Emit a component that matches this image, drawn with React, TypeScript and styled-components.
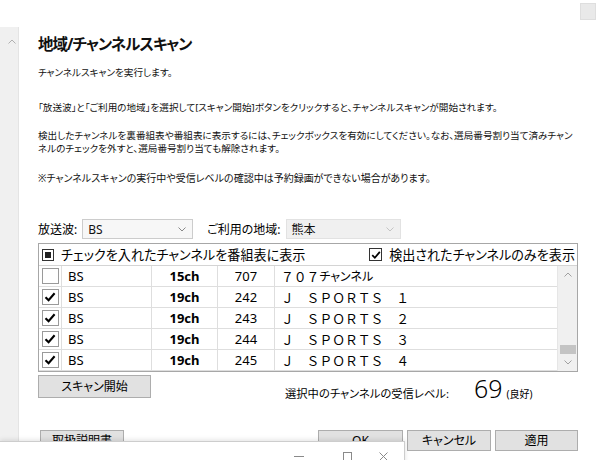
import React from "react";
import styled, { createGlobalStyle } from "styled-components";

const FONT = `"Noto Sans", "Noto Sans CJK JP", sans-serif`;

const Global = createGlobalStyle`
  html, body { margin: 0; padding: 0; background: #fff; }
  body { font-family: ${FONT}; color: #000; font-feature-settings: "palt"; }
  * { box-sizing: border-box; }
`;

const Page = styled.div`
  position: relative;
  width: 596px;
  height: 460px;
  overflow: hidden;
  display: flex;
  align-items: stretch;
  background: #fff;
`;

const SideScroll = styled.div`
  width: 19px;
  flex-shrink: 0;
  margin-top: 27px;
  padding: 12px 0 0 5px;
  background: #f0f0f0;
  border-right: 1px solid #e4e4e4;
  display: flex;
  justify-content: center;
  align-items: flex-start;
`;

const Main = styled.main`
  width: 540px;
  margin-left: 19px;
  padding-top: 34px;
  display: flex;
  flex-direction: column;
`;

const Title = styled.h1`
  margin: 0;
  font-size: 15.5px;
  letter-spacing: -1px;
  line-height: 20px;
  font-weight: 700;
  color: #111;
`;

const Para = styled.p<{ $mt: number; $fs?: number }>`
  margin: ${(p) => p.$mt}px 0 0;
  font-size: ${(p) => p.$fs ?? 9.6}px;
  line-height: 13px;
  white-space: nowrap;
  color: #111;
`;

const FormRow = styled.div`
  display: flex;
  align-items: center;
  height: 20px;
  margin-top: 34px;
  font-size: 12px;
`;

const FieldLabel = styled.span<{ $ml?: number }>`
  margin-left: ${(p) => p.$ml ?? 0}px;
  margin-right: 5px;
`;

const Select = styled.div<{ $w: number; $disabled?: boolean }>`
  width: ${(p) => p.$w}px;
  height: 20px;
  display: flex;
  align-items: center;
  justify-content: space-between;
  padding: 0 6px 0 5px;
  font-size: 12px;
  background: ${(p) => (p.$disabled ? "#f0f0f0" : "#f7f7f7")};
  border: 1px solid ${(p) => (p.$disabled ? "#e2e2e2" : "#cccccc")};
  color: #111;
`;

const Table = styled.div`
  margin-top: 4px;
  border: 1px solid #a7a7a7;
  display: flex;
  flex-direction: column;
`;

const TableHead = styled.div`
  height: 22px;
  display: flex;
  align-items: center;
  justify-content: space-between;
  padding: 0 2px 0 3px;
  border-bottom: 1px solid #d4d4d4;
  font-size: 13.1px;
`;

const HeadGroup = styled.label`
  display: flex;
  align-items: center;
  gap: 7px;
`;

const Indeterminate = styled.span`
  width: 12px;
  height: 12px;
  border: 1px solid #333;
  padding: 2px;
  display: flex;
  &::after {
    content: "";
    flex: 1;
    background: #222;
  }
`;

const HeadCheck = styled.span`
  width: 13px;
  height: 13px;
  border: 1px solid #333;
  display: flex;
  align-items: center;
  justify-content: center;
  background: #fff;
`;

const TableBody = styled.div`
  display: flex;
  height: 105px;
`;

const Rows = styled.div`
  flex: 1;
  display: flex;
  flex-direction: column;
`;

const Row = styled.div`
  display: grid;
  grid-template-columns: 23px 90px 66px 57px 1fr;
  height: 21px;
  border-bottom: 1px solid #dedede;
  font-size: 13px;
`;

const Cell = styled.div<{ $align?: "left" | "center"; $bold?: boolean; $pl?: number; $last?: boolean }>`
  display: flex;
  align-items: center;
  justify-content: ${(p) => (p.$align === "center" ? "center" : "flex-start")};
  padding-left: ${(p) => p.$pl ?? 0}px;
  font-weight: ${(p) => (p.$bold ? 700 : 400)};
  border-right: ${(p) => (p.$last ? "none" : "1px solid #dedede")};
  white-space: nowrap;
  overflow: hidden;
`;

const NameText = styled.span<{ $prop?: boolean }>`
  font-feature-settings: ${(p) => (p.$prop ? '"palt"' : "normal")};
  font-size: ${(p) => (p.$prop ? 12 : 12.8)}px;
`;

const RowCheck = styled.span`
  width: 17px;
  height: 16px;
  border: 1px solid #9a9a9a;
  background: #fff;
  display: flex;
  align-items: center;
  justify-content: center;
`;

const ScrollBar = styled.div`
  width: 20px;
  background: #f0f0f0;
  border-left: 1px solid #e6e6e6;
  display: flex;
  flex-direction: column;
`;

const ScrollArrow = styled.div`
  height: 17px;
  display: flex;
  align-items: center;
  justify-content: center;
`;

const ScrollTrack = styled.div`
  flex: 1;
  display: flex;
  flex-direction: column;
  justify-content: flex-end;
  align-items: center;
`;

const Thumb = styled.div`
  width: 16px;
  height: 9px;
  background: #c4c4c4;
`;

const ScanRow = styled.div`
  display: flex;
  align-items: center;
  height: 23px;
  margin-top: 3px;
`;

const Button = styled.button<{ $w: number; $h?: number; $ml?: number }>`
  width: ${(p) => p.$w}px;
  height: ${(p) => p.$h ?? 21}px;
  margin: 0 0 0 ${(p) => p.$ml ?? 0}px;
  padding: 0;
  background: #e1e1e1;
  border: 1px solid #adadad;
  font-family: ${FONT};
  font-feature-settings: "palt";
  font-size: 12px;
  color: #000;
  line-height: 1;
`;

const Level = styled.div`
  margin-left: 134px;
  display: flex;
  align-items: baseline;
  font-size: 11.3px;
  line-height: 1;
  padding-top: 4px;
`;

const LevelValue = styled.span`
  margin-left: 25px;
  font-size: 25px;
  font-weight: 300;
  line-height: 1;
`;

const LevelNote = styled.span`
  margin-left: 4px;
  font-size: 10px;
`;

const ButtonRow = styled.div`
  display: flex;
  justify-content: space-between;
  margin-top: 32px;
`;

const ButtonGroup = styled.div`
  display: flex;
  gap: 4px;
`;

const CornerTile = styled.div`
  position: absolute;
  top: 3px;
  right: 0;
  width: 16px;
  height: 17px;
  background: #e9e9e9;
  border: 1px solid #dedede;
`;

const OverlayWindow = styled.div`
  position: absolute;
  left: 0;
  top: 441px;
  width: 405px;
  height: 40px;
  background: #fff;
  border-top: 1px solid #cdcdcd;
  border-right: 1px solid #cdcdcd;
  box-shadow: 0 -1px 5px rgba(0, 0, 0, 0.12);
  display: flex;
  justify-content: flex-end;
  align-items: flex-start;
  padding: 10px 16px 0 0;
`;

const CaptionGlyph = styled.span<{ $ml?: number }>`
  display: flex;
  margin-left: ${(p) => p.$ml ?? 0}px;
`;

const Chevron = ({ up, color = "#a8a8a8" }: { up?: boolean; color?: string }) => (
  <svg width="8" height="5" viewBox="0 0 8 5">
    <polyline
      points={up ? "0.5,4.5 4,1 7.5,4.5" : "0.5,0.5 4,4 7.5,0.5"}
      fill="none"
      stroke={color}
      strokeWidth="1"
    />
  </svg>
);

const CheckMark = ({ size = 12 }: { size?: number }) => (
  <svg width={size} height={size} viewBox="0 0 12 12">
    <polyline points="1.5,6.2 4.6,9.3 10.6,2.3" fill="none" stroke="#000" strokeWidth="2.1" />
  </svg>
);

const rows = [
  { checked: false, ch: "15ch", no: "707", name: "７０７", kana: "チャンネル" },
  { checked: true, ch: "19ch", no: "242", name: "Ｊ　ＳＰＯＲＴＳ　１", kana: "" },
  { checked: true, ch: "19ch", no: "243", name: "Ｊ　ＳＰＯＲＴＳ　２", kana: "" },
  { checked: true, ch: "19ch", no: "244", name: "Ｊ　ＳＰＯＲＴＳ　３", kana: "" },
  { checked: true, ch: "19ch", no: "245", name: "Ｊ　ＳＰＯＲＴＳ　４", kana: "" },
];

export default function App() {
  return (
    <>
      <Global />
      <Page>
        <SideScroll>
          <Chevron up color="#b0b0b0" />
        </SideScroll>
        <Main>
          <Title>地域/チャンネルスキャン</Title>
          <Para $mt={12}>チャンネルスキャンを実行します。</Para>
          <Para $mt={22}>
            「放送波」と「ご利用の地域」を選択して[スキャン開始]ボタンをクリックすると、チャンネルスキャンが開始されます。
          </Para>
          <Para $mt={15}>
            検出したチャンネルを裏番組表や番組表に表示するには、チェックボックスを有効にしてください。なお、選局番号割り当て済みチャン
            <br />
            ネルのチェックを外すと、選局番号割り当ても解除されます。
          </Para>
          <Para $mt={17} $fs={10}>
            ※チャンネルスキャンの実行中や受信レベルの確認中は予約録画ができない場合があります。
          </Para>

          <FormRow>
            <FieldLabel>放送波:</FieldLabel>
            <Select $w={111}>
              <span>BS</span>
              <Chevron color="#888" />
            </Select>
            <FieldLabel $ml={14}>ご利用の地域:</FieldLabel>
            <Select $w={115} $disabled>
              <span>熊本</span>
              <Chevron color="#c4c4c4" />
            </Select>
          </FormRow>

          <Table>
            <TableHead>
              <HeadGroup>
                <Indeterminate />
                <span>チェックを入れたチャンネルを番組表に表示</span>
              </HeadGroup>
              <HeadGroup>
                <HeadCheck>
                  <CheckMark size={10} />
                </HeadCheck>
                <span>検出されたチャンネルのみを表示</span>
              </HeadGroup>
            </TableHead>
            <TableBody>
              <Rows>
                {rows.map((r) => (
                  <Row key={r.no}>
                    <Cell $align="center">
                      <RowCheck>{r.checked && <CheckMark />}</RowCheck>
                    </Cell>
                    <Cell $pl={6}>BS</Cell>
                    <Cell $align="center" $bold>
                      {r.ch}
                    </Cell>
                    <Cell $align="center">{r.no}</Cell>
                    <Cell $pl={6} $last>
                      <NameText>{r.name}</NameText>
                      {r.kana && <NameText $prop>{r.kana}</NameText>}
                    </Cell>
                  </Row>
                ))}
              </Rows>
              <ScrollBar>
                <ScrollArrow>
                  <Chevron up color="#a0a0a0" />
                </ScrollArrow>
                <ScrollTrack>
                  <Thumb />
                </ScrollTrack>
                <ScrollArrow>
                  <Chevron color="#a0a0a0" />
                </ScrollArrow>
              </ScrollBar>
            </TableBody>
          </Table>

          <ScanRow>
            <Button $w={113} $h={23}>スキャン開始</Button>
            <Level>
              <span>選択中のチャンネルの受信レベル:</span>
              <LevelValue>69</LevelValue>
              <LevelNote>(良好)</LevelNote>
            </Level>
          </ScanRow>

          <ButtonRow>
            <Button $w={84} $ml={2}>取扱説明書</Button>
            <ButtonGroup>
              <Button $w={85}>OK</Button>
              <Button $w={84}>キャンセル</Button>
              <Button $w={83}>適用</Button>
            </ButtonGroup>
          </ButtonRow>
        </Main>

        <CornerTile />

        <OverlayWindow>
          <CaptionGlyph>
            <svg width="10" height="9" viewBox="0 0 10 9">
              <line x1="0" y1="4.5" x2="10" y2="4.5" stroke="#8a8a8a" strokeWidth="1" />
            </svg>
          </CaptionGlyph>
          <CaptionGlyph $ml={39}>
            <svg width="9" height="9" viewBox="0 0 9 9">
              <rect x="0.5" y="0.5" width="8" height="8" fill="none" stroke="#8a8a8a" strokeWidth="1" />
            </svg>
          </CaptionGlyph>
          <CaptionGlyph $ml={27}>
            <svg width="9" height="9" viewBox="0 0 9 9">
              <path d="M0.5 0.5 L8.5 8.5 M8.5 0.5 L0.5 8.5" stroke="#8a8a8a" strokeWidth="1" />
            </svg>
          </CaptionGlyph>
        </OverlayWindow>
      </Page>
    </>
  );
}
